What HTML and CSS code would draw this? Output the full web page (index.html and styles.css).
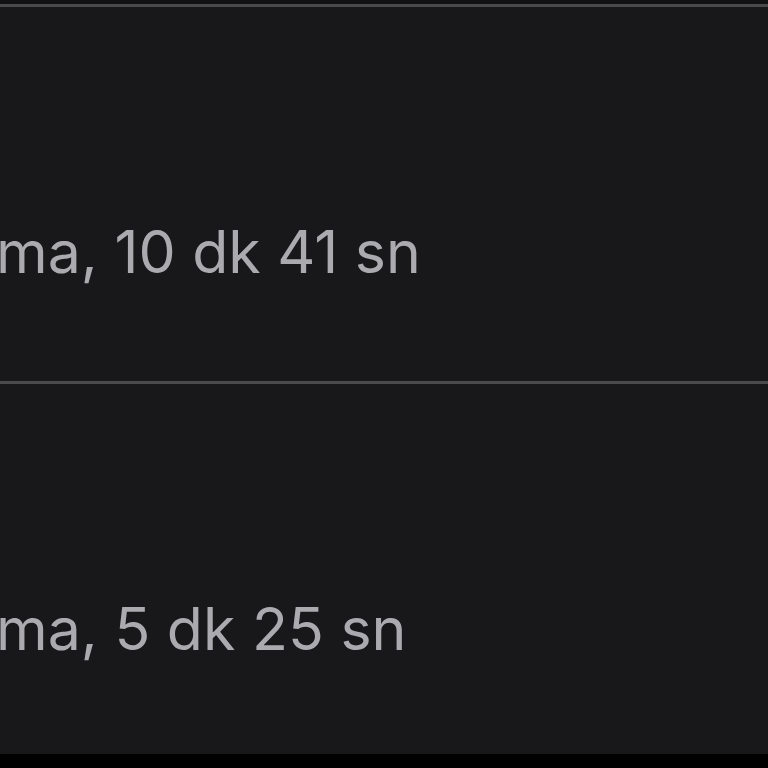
FILE: index.html
```html
<!DOCTYPE html>
<html lang="tr">
<head>
    <meta charset="UTF-8">
    <meta name="viewport" content="width=device-width, initial-scale=1.0">
    <title>Süreler</title>
    <link rel="stylesheet" href="styles.css">
</head>
<body>

    <div class="screen">
        <div class="row">
            <p class="time">ma, 10 dk 41 sn</p>
        </div>
        <div class="row last">
            <p class="time">ma, 5 dk 25 sn</p>
        </div>
    </div>

</body>
</html>
```

FILE: styles.css
```css
html, body {
    margin: 0;
    height: 100%;
    background-color: #000;
    overflow: hidden;
}
.screen {
    padding-top: 4px;
    background-color: #111113;
    font-family: Inter, "Noto Sans", sans-serif;
}
.row {
    height: 374px;
    border-top: 3px solid #4a4a4d;
    background-color: #18181a;
    box-sizing: content-box;
    overflow: hidden;
}
.row.last {
    height: 370px;
}
.time {
    margin: 215px 0 0 -4px;
    font-size: 59px;
    line-height: 1;
    color: #ababaf;
    white-space: nowrap;
}
```
